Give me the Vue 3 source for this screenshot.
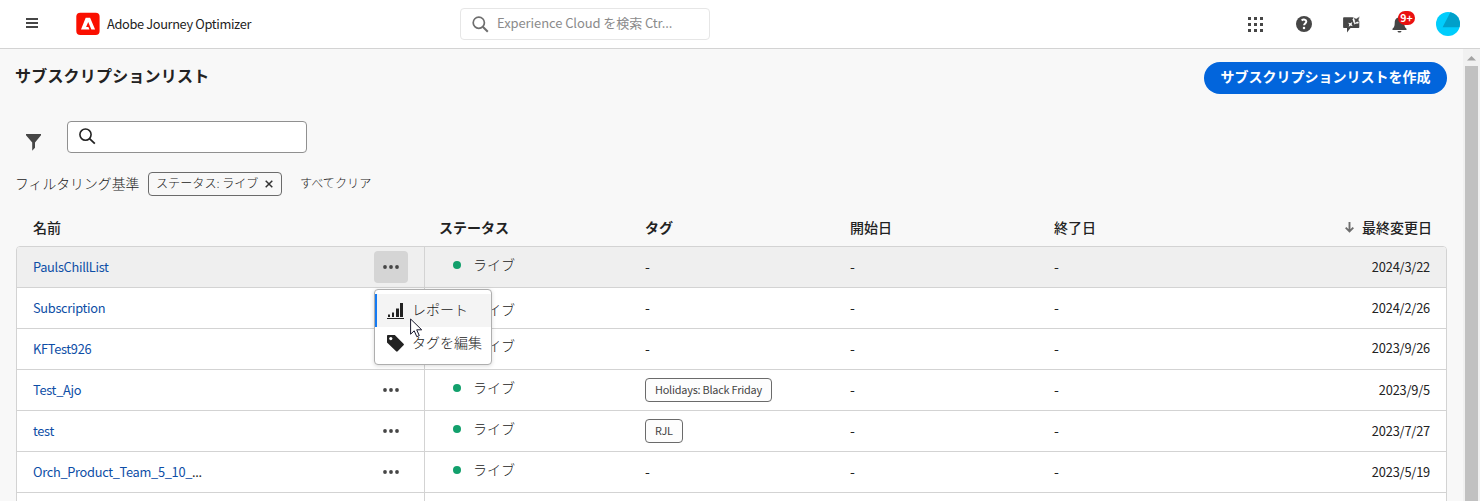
<script setup>
const rows = [
  { name: 'PaulsChillList', date: '2024/3/22', status: 'up', selected: true },
  { name: 'Subscription', date: '2024/2/26', status: 'down' },
  { name: 'KFTest926', date: '2023/9/26', status: 'higher', lift: true },
  { name: 'Test_Ajo', date: '2023/9/5', status: 'up', tag: 'Holidays: Black Friday' },
  { name: 'test', date: '2023/7/27', status: 'up', tag: 'RJL' },
  { name: 'Orch_Product_Team_5_10_', more: true, date: '2023/5/19', status: 'up' },
]
const gridDots = [0, 6, 12]
</script>

<template>
  <div class="app">
    <header class="topbar">
      <svg class="burger" width="12" height="10" viewBox="0 0 12 10"><path d="M0 0h12v2H0zM0 4h12v2H0zM0 8h12v2H0z" fill="#464646" /></svg>
      <svg class="logo" width="24" height="24" viewBox="0 0 24 24">
        <rect x=".3" y=".7" width="23.3" height="22.4" rx="4" fill="#fa0f00" />
        <path d="M5 17.6 9.7 5.7h4.4l5 11.9h-3.7L12.2 10l-2.1 5h2.3l1 2.6z" fill="#fff" />
      </svg>
      <span class="product">Adobe Journey Optimizer</span>
      <div class="cloud-search">
        <svg width="17" height="17" viewBox="0 0 17 17" fill="none" stroke="#6e6e6e"><circle cx="6.8" cy="6.7" r="5.6" stroke-width="1.7" /><path d="m10.8 10.8 5 5" stroke-width="2" /></svg>
        <span>Experience Cloud を検索 Ctr...</span>
      </div>
      <div class="tools">
        <svg class="apps" width="15" height="15" viewBox="0 0 15 15" fill="#464646">
          <template v-for="y in gridDots" :key="y"><rect v-for="x in gridDots" :key="x" :x="x" :y="y" width="3" height="3" /></template>
        </svg>
        <svg class="help" width="16" height="16" viewBox="0 0 16 16"><circle cx="8" cy="8" r="8" fill="#464646" /><path d="M5.6 4.3C7.6 3 10.3 3.5 10.3 5.5c0 1.9-2.2 1.9-2.2 3.8" fill="none" stroke="#fff" stroke-width="2" /><circle cx="8" cy="12" r="1.25" fill="#fff" /></svg>
        <svg class="chat" width="17" height="17" viewBox="0 0 17 17">
          <path d="M1.2 1.300h9.600L9.500 3.800l1.800 2.700 3.200.8 1.800-1.800v5.500c0 .7-.4 1.100-1 1.100H7.500L4 16.500v-4.400H1.200c-.7 0-1.100-.4-1.100-1.100V2.400c0-.7.4-1.100 1.100-1.100z" fill="#464646" />
          <path d="m10.200 1.600 3.200.9L16.900.200l-1.200 3.900 1.300 2.300-3-.5-2.600 2.300.3-3.700z" fill="#464646" stroke="#fff" stroke-width=".5" />
          <path d="m5.200 6.700 2.100.6 2-1.300-.7 2.200 1.100 2-2.100-.7-1.900 1.200.6-2.100z" fill="#fff" />
          <path d="m10.200 3.500 1.200 3.800 4.100-.4" stroke="#fff" stroke-width="1" fill="none" />
        </svg>
        <div class="bell">
          <svg width="15" height="17" viewBox="0 0 15 17" fill="#464646"><path d="M7.500 0c.9 0 1.400.6 1.400 1.500 2.600.7 3.400 2.700 3.400 5.500 0 3.100.6 4.500 2.200 5.700v1.200H.500v-1.200C2.100 11.500 2.700 10.100 2.700 7c0-2.800.9-4.800 3.400-5.500C6.100.600 6.600 0 7.500 0zM5.500 15h4c-.2 1.100-1 1.600-2 1.600s-1.800-.5-2-1.600z" /></svg>
          <span>9+</span>
        </div>
        <svg class="avatar" width="24" height="24" viewBox="0 0 24 24"><defs><clipPath id="face"><circle cx="12" cy="12" r="12" /></clipPath></defs><g clip-path="url(#face)"><path d="M0 0h24v24H0z" fill="#00cdfc" /><path d="M14.500 0 6.600 15.200H24V0z" fill="#00a0ca" /></g></svg>
      </div>
    </header>

    <div class="body">
      <main>
        <div class="heading"><h1>サブスクリプションリスト</h1><button>サブスクリプションリストを作成</button></div>
        <div class="search-row">
          <svg class="funnel" width="15" height="17" viewBox="0 0 15 17"><path d="M0 0h15v1.200L9 8.500v5.300L6.200 16.800V8.500L0 1.200z" fill="#464646" /></svg>
          <div class="search"><svg width="17" height="17" viewBox="0 0 17 17" fill="none" stroke="#222"><circle cx="6.500" cy="6.600" r="5.600" stroke-width="1.600" /><path d="m10.500 10.700 5.300 5" stroke-width="1.800" /></svg></div>
        </div>
        <div class="filters">
          <span class="label">フィルタリング基準</span>
          <span class="chip"><span>ステータス: ライブ</span><svg width="8" height="8" viewBox="0 0 8 8"><path d="m.7.700 6.600 6.600m0-6.600L.700 7.300" stroke="#333" stroke-width="1.500" /></svg></span>
          <span class="clear">すべてクリア</span>
        </div>
        <div class="columns">
          <b>名前</b><b>ステータス</b><b>タグ</b><b>開始日</b><b>終了日</b>
          <b class="sort"><svg width="9" height="11" viewBox="0 0 9 11" fill="none" stroke="#6e6e6e" stroke-width="1.900"><path d="M4.500 0v9M.700 5.700l3.800 3.800 3.800-3.800" /></svg>最終変更日</b>
        </div>
        <section class="table">
          <div v-for="row in rows" :key="row.name" class="row" :class="{ selected: row.selected }">
            <div class="name"><a>{{ row.name }}<i v-if="row.more">...</i></a>
              <span class="more"><svg width="16" height="4" viewBox="0 0 16 4" fill="#464646"><circle cx="2" cy="2" r="1.900" /><circle cx="8" cy="2" r="1.900" /><circle cx="14" cy="2" r="1.900" /></svg></span>
            </div>
            <div class="status" :class="row.status"><i class="dot"></i><span>ライブ</span></div>
            <div class="tagcell"><span v-if="row.tag" class="tag">{{ row.tag }}</span><div v-else class="dash">-</div></div>
            <div class="dash">-</div><div class="dash">-</div>
            <div class="date" :class="{ lift: row.lift }">{{ row.date }}</div>
          </div>
          <div class="row"><div class="name"></div></div>
        </section>
      </main>
      <aside class="scroll"><svg width="9" height="5" viewBox="0 0 9 5"><path d="M0 4.500 4.500 0 9 4.500z" fill="#a3a3a3" /></svg><div class="thumb"></div></aside>
    </div>

    <div class="menu">
      <div class="item active">
        <svg width="17" height="16" viewBox="0 0 17 16" fill="#222"><path d="M0 15h17v1H0zM1 11.500h2V14H1zM5 9.500h2V14H5zM9 5.500h3V14H9zM13 0h3v14h-3z" /></svg><span>レポート</span>
      </div>
      <div class="item">
        <svg width="17" height="17" viewBox="0 0 17 17"><path d="M.800 0h7l8.700 8.700c.6.600.6 1 0 1.600l-5.800 6c-.6.600-1 .6-1.600 0L0 7.500V.900C0 .400.300 0 .800 0z" fill="#222" /><circle cx="3.800" cy="3.600" r="1.600" fill="#fff" /></svg><span>タグを編集</span>
      </div>
    </div>
    <svg class="cursor" width="13" height="20" viewBox="0 0 13 20"><path d="M.600 1v15.200l3.600-3.400 2.600 5.900 2.500-1.100-2.600-5.800h5z" fill="#fff" stroke="#15152a" stroke-width="1" /></svg>
  </div>
</template>

<style>
html, body { margin: 0; overflow: hidden; }
</style>
<style scoped>
.app { position: relative; width: 1480px; height: 501px; overflow: hidden; background: #f8f8f8; color: #222; font: 14px/20px "Noto Sans CJK JP", sans-serif; white-space: nowrap; }
.app * { box-sizing: border-box; }
svg { display: block; flex: none; }
i { font-style: normal; }
.topbar { height: 49px; background: #fff; border-bottom: 1px solid #d3d3d3; display: flex; align-items: center; }
.burger { margin: 0 0 2px 26px; }
.logo { margin-left: 38px; }
.product { margin-left: 7px; width: 353px; font-size: 12.8px; letter-spacing: -.35px; }
.cloud-search { width: 250px; height: 32px; border: 1px solid #e6e6e6; border-radius: 4px; display: flex; align-items: center; padding-left: 11px; gap: 8px; color: #8b8b8b; font-size: 13px; }
.cloud-search span { margin-bottom: 2px; letter-spacing: -.09px; }
.tools { flex: 1; display: flex; align-items: center; padding-left: 538px; }
.help { margin-left: 33px; }
.chat { margin-left: 31px; }
.bell { position: relative; margin-left: 32px; }
.bell span { position: absolute; left: 6px; top: -5px; width: 17px; height: 14px; border-radius: 7px; background: #ea1010; color: #fff; font-size: 10.5px; font-weight: 700; line-height: 13px; text-align: center; }
.avatar { margin-left: 29px; }
.body { display: flex; height: 452px; }
main { width: 1463px; height: 452px; overflow: hidden; }
.heading { display: flex; justify-content: space-between; padding: 13px 16px 0 15px; }
h1 { margin: 2px 0 0; font-size: 16px; line-height: 22px; font-weight: 700; letter-spacing: .2px; }
button { height: 32px; width: 243px; border: 0; border-radius: 16px; background: #0265dc; color: #fff; font: 700 14px/20px "Noto Sans CJK JP", sans-serif; padding: 0 0 4px; }
.search-row { display: flex; padding: 27px 0 0 26px; }
.funnel { margin-top: 13px; }
.search { margin-left: 26px; width: 240px; height: 32px; border: 1px solid #909090; border-radius: 4px; background: #fff; padding: 6px 0 0 11px; }
.filters { height: 24px; margin-top: 19px; padding-left: 15px; display: flex; align-items: center; font-weight: 300; }
.label { width: 133px; margin-bottom: 2px; font-size: 13.85px; }
.chip { width: 134px; height: 24px; border: 1px solid #6b6b6b; border-radius: 4px; display: flex; align-items: center; padding-left: 7px; font-size: 12.1px; }
.chip span { width: 109px; margin-bottom: 2px; }
.clear { margin-left: 18px; margin-bottom: 2px; font-size: 12.1px; }
.columns, .row { display: grid; grid-template-columns: 408px 220px 205px 204px 1fr 130px; }
.columns { height: 50px; margin: 0 16px; padding-top: 21px; font-weight: 500; align-items: start; }
.columns b { font-weight: 500; }
.columns b:first-child { padding-left: 17px; }
.columns b:nth-child(2) { padding-left: 15px; font-weight: 700; }
.columns b:nth-child(3) { font-weight: 700; padding-left: 1px; }
.columns b:nth-child(4), .columns b:nth-child(5) { padding-left: 1px; }
.columns .sort { display: flex; justify-content: flex-end; align-items: center; gap: 8px; padding-right: 15px; }
.table { width: 1431px; margin-left: 16px; border: 1px solid #d3d3d3; border-radius: 4px 4px 0 0; background: #fff; overflow: hidden; }
.row { height: 41px; border-bottom: 1px solid #d3d3d3; align-items: center; }
.selected { background: #efefef; }
.name { height: 40px; border-right: 1px solid #d3d3d3; display: flex; align-items: center; justify-content: space-between; padding: 0 16px; }
.name a { color: #0d4ea6; font-size: 12.8px; letter-spacing: -.3px; }
.name a i { color: #333; }
.more { width: 34px; height: 32px; display: grid; place-items: center; border-radius: 4px; }
.selected .more { background: #d5d5d5; }
.status { display: flex; align-items: center; padding-left: 28px; margin-top: -4px; font-weight: 300; }
.status span { margin: -3px 0 0 -1px; }
.status.down { margin-top: 4px; }
.status.higher { margin-top: -6px; }
.dot { width: 8px; height: 8px; border-radius: 50%; background: #12a06c; margin-right: 13px; }
.dash { margin-top: -2px; }
.tag { display: inline-block; height: 24px; padding: 0 9px; border: 1px solid #6b6b6b; border-radius: 4px; font-size: 10.9px; letter-spacing: -.22px; line-height: 21px; vertical-align: middle; background: #fdfdfd; color: #444; }
.date { text-align: right; padding-right: 16px; font-size: 12.8px; letter-spacing: -.18px; }
.date.lift { margin-top: -2px; }
.scroll { width: 17px; background: #f1f1f1; padding: 7px 2px 0; display: flex; flex-direction: column; align-items: center; }
.thumb { width: 13px; height: 460px; flex: none; margin-top: 5px; background: #c1c1c1; }
.menu { position: absolute; left: 374px; top: 289px; width: 118px; height: 76px; border: 1px solid #aeaeae; border-radius: 4px; background: #fff; padding-top: 4px; box-shadow: 0 1px 4px rgba(0,0,0,.15); font-weight: 300; }
.item { height: 33px; display: flex; align-items: center; padding-left: 12px; gap: 8px; }
.item span { margin-bottom: 3px; }
.active { background: #f4f4f4; border-left: 2px solid #147af3; padding-left: 10px; }
.cursor { position: absolute; left: 410px; top: 318px; }
</style>
